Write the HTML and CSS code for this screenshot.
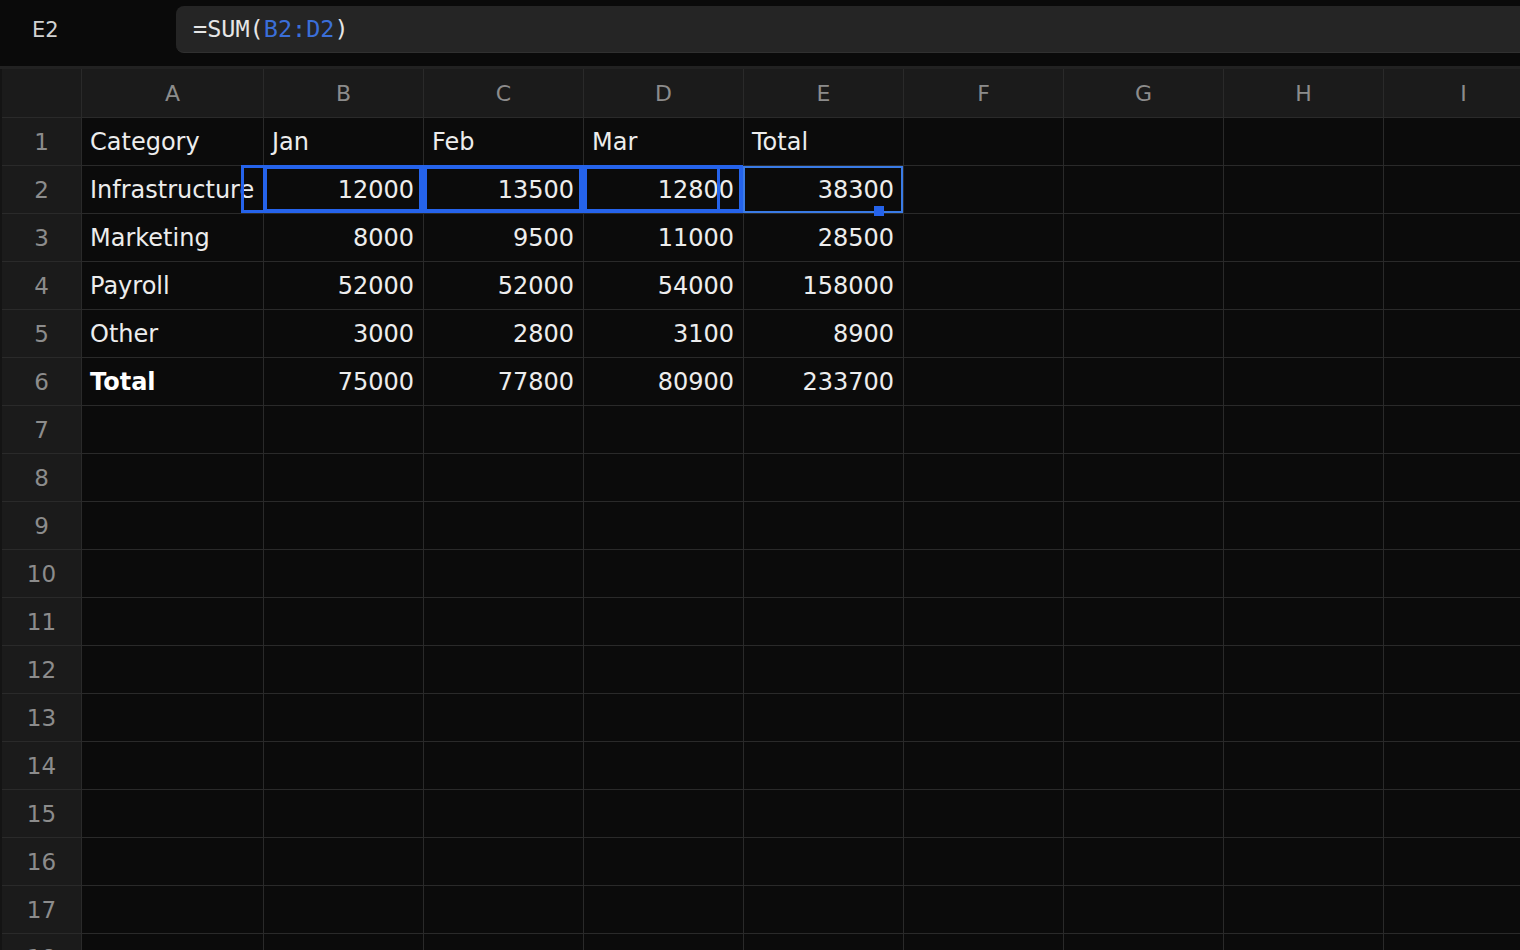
FILE: index.html
```html
<!DOCTYPE html>
<html>
<head>
<meta charset="utf-8">
<title>Sheet</title>
<link rel="stylesheet" href="styles.css">
</head>
<body>
<div class="topbar">
  <div class="namebox">E2</div>
  <div class="formula"><span class="fx">=SUM(</span><span class="ref">B2:D2</span><span class="fx">)</span></div>
</div>
<div class="sheet">
  <div class="grid">
    <div class="corner"></div>
    <div class="ch">A</div><div class="ch">B</div><div class="ch">C</div><div class="ch">D</div><div class="ch">E</div><div class="ch">F</div><div class="ch">G</div><div class="ch">H</div><div class="ch">I</div>

    <div class="rn">1</div>
    <div class="c">Category</div><div class="c">Jan</div><div class="c">Feb</div><div class="c">Mar</div><div class="c">Total</div><div class="c"></div><div class="c"></div><div class="c"></div><div class="c"></div>

    <div class="rn">2</div>
    <div class="c">Infrastructure</div><div class="c num">12000</div><div class="c num">13500</div><div class="c num">12800</div><div class="c num">38300</div><div class="c"></div><div class="c"></div><div class="c"></div><div class="c"></div>

    <div class="rn">3</div>
    <div class="c">Marketing</div><div class="c num">8000</div><div class="c num">9500</div><div class="c num">11000</div><div class="c num">28500</div><div class="c"></div><div class="c"></div><div class="c"></div><div class="c"></div>

    <div class="rn">4</div>
    <div class="c">Payroll</div><div class="c num">52000</div><div class="c num">52000</div><div class="c num">54000</div><div class="c num">158000</div><div class="c"></div><div class="c"></div><div class="c"></div><div class="c"></div>

    <div class="rn">5</div>
    <div class="c">Other</div><div class="c num">3000</div><div class="c num">2800</div><div class="c num">3100</div><div class="c num">8900</div><div class="c"></div><div class="c"></div><div class="c"></div><div class="c"></div>

    <div class="rn">6</div>
    <div class="c bold">Total</div><div class="c num">75000</div><div class="c num">77800</div><div class="c num">80900</div><div class="c num">233700</div><div class="c"></div><div class="c"></div><div class="c"></div><div class="c"></div>

    <div class="rn">7</div><div class="c"></div><div class="c"></div><div class="c"></div><div class="c"></div><div class="c"></div><div class="c"></div><div class="c"></div><div class="c"></div><div class="c"></div>
    <div class="rn">8</div><div class="c"></div><div class="c"></div><div class="c"></div><div class="c"></div><div class="c"></div><div class="c"></div><div class="c"></div><div class="c"></div><div class="c"></div>
    <div class="rn">9</div><div class="c"></div><div class="c"></div><div class="c"></div><div class="c"></div><div class="c"></div><div class="c"></div><div class="c"></div><div class="c"></div><div class="c"></div>
    <div class="rn">10</div><div class="c"></div><div class="c"></div><div class="c"></div><div class="c"></div><div class="c"></div><div class="c"></div><div class="c"></div><div class="c"></div><div class="c"></div>
    <div class="rn">11</div><div class="c"></div><div class="c"></div><div class="c"></div><div class="c"></div><div class="c"></div><div class="c"></div><div class="c"></div><div class="c"></div><div class="c"></div>
    <div class="rn">12</div><div class="c"></div><div class="c"></div><div class="c"></div><div class="c"></div><div class="c"></div><div class="c"></div><div class="c"></div><div class="c"></div><div class="c"></div>
    <div class="rn">13</div><div class="c"></div><div class="c"></div><div class="c"></div><div class="c"></div><div class="c"></div><div class="c"></div><div class="c"></div><div class="c"></div><div class="c"></div>
    <div class="rn">14</div><div class="c"></div><div class="c"></div><div class="c"></div><div class="c"></div><div class="c"></div><div class="c"></div><div class="c"></div><div class="c"></div><div class="c"></div>
    <div class="rn">15</div><div class="c"></div><div class="c"></div><div class="c"></div><div class="c"></div><div class="c"></div><div class="c"></div><div class="c"></div><div class="c"></div><div class="c"></div>
    <div class="rn">16</div><div class="c"></div><div class="c"></div><div class="c"></div><div class="c"></div><div class="c"></div><div class="c"></div><div class="c"></div><div class="c"></div><div class="c"></div>
    <div class="rn">17</div><div class="c"></div><div class="c"></div><div class="c"></div><div class="c"></div><div class="c"></div><div class="c"></div><div class="c"></div><div class="c"></div><div class="c"></div>
    <div class="rn">18</div><div class="c"></div><div class="c"></div><div class="c"></div><div class="c"></div><div class="c"></div><div class="c"></div><div class="c"></div><div class="c"></div><div class="c"></div>
  </div>

  <div class="hl hl-range"></div>
  <div class="hl hl-cell hl-b"></div>
  <div class="hl hl-cell hl-c"></div>
  <div class="hl hl-cell hl-d"></div>
  <div class="sel"></div>
  <div class="handle"></div>
</div>
</body>
</html>
```

FILE: styles.css
```css
html, body {
  margin: 0;
  padding: 0;
  background: #0b0b0b;
  overflow: hidden;
  width: 1520px;
  height: 950px;
}

body {
  font-family: "DejaVu Sans", sans-serif;
  color: #ededed;
}

.topbar {
  height: 66px;
  display: flex;
  align-items: flex-start;
  background: #0a0a0a;
}

.namebox {
  width: 144px;
  padding-left: 32px;
  height: 59px;
  display: flex;
  align-items: center;
  font-size: 21px;
  color: #d2d2d2;
}

.formula {
  flex: 1;
  margin-top: 6px;
  margin-right: -20px;
  height: 46px;
  border-bottom: 1px solid #303030;
  background: #252525;
  border-radius: 8px;
  display: flex;
  align-items: center;
  padding-left: 17px;
  font-family: "DejaVu Sans Mono", monospace;
  font-size: 23.5px;
  white-space: pre;
}

.fx { color: #e6e6e6; }
.ref { color: #3b6fd9; }

.sheet {
  position: relative;
  border-top: 3px solid #222222;
}

.grid {
  display: grid;
  grid-template-columns: 79px 181px repeat(8, 159px);
  grid-template-rows: 48px repeat(18, 47px);
  gap: 1px;
  background: #2a2a2a;
  border-left: 2px solid #141414;
  width: max-content;
}

.corner, .ch, .rn {
  background: #1b1b1b;
  color: #8c8c8c;
  display: flex;
  align-items: center;
  justify-content: center;
}

.ch { font-size: 22px; }
.rn { font-size: 23px; }

.c {
  background: #0b0b0b;
  display: flex;
  align-items: center;
  padding: 0 8px;
  font-size: 24px;
  white-space: nowrap;
  overflow: visible;
  min-width: 0;
}

.num {
  justify-content: flex-end;
  padding-right: 9px;
}

.bold {
  font-weight: bold;
  color: #ffffff;
}

.hl {
  position: absolute;
  top: 96px;
  height: 48px;
  box-sizing: border-box;
  border: 3px solid #2563eb;
  pointer-events: none;
}

.hl-cell { border-width: 4px; }

.hl-range { left: 241px; width: 479px; }
.hl-b { left: 263px; width: 160px; }
.hl-c { left: 423px; width: 160px; }
.hl-d { left: 583px; width: 160px; }

.sel {
  position: absolute;
  left: 743px;
  top: 97px;
  width: 160px;
  height: 47px;
  box-sizing: border-box;
  border: 2px solid #3a7be6;
}

.handle {
  position: absolute;
  left: 874px;
  top: 137px;
  width: 10px;
  height: 10px;
  background: #2563eb;
}
```
